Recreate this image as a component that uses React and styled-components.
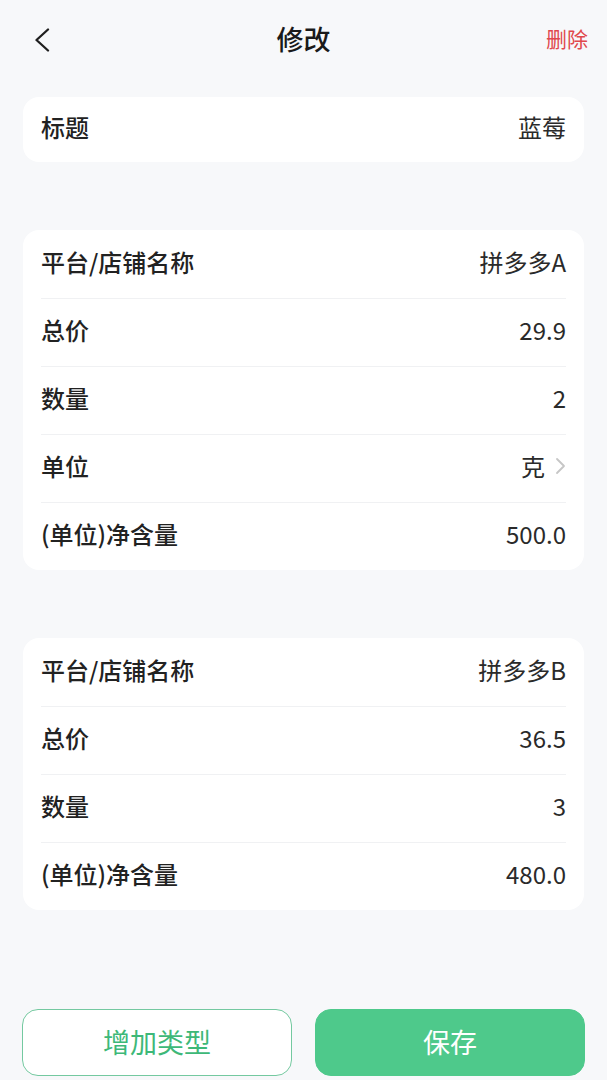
import React from "react";
import styled, { createGlobalStyle } from "styled-components";

const GlobalStyle = createGlobalStyle`
  html, body {
    margin: 0;
    padding: 0;
    background: #f7f8fa;
  }
  * { box-sizing: border-box; }
`;

const Page = styled.div`
  min-height: 100vh;
  display: flex;
  flex-direction: column;
  background: #f7f8fa;
  font-family: "Noto Sans CJK SC", "Noto Sans", sans-serif;
  color: #1f1f1f;
`;

const Header = styled.div`
  height: 80px;
  padding-bottom: 3px;
  display: grid;
  grid-template-columns: 80px 1fr 80px;
  align-items: center;
`;

const Back = styled.div`
  padding-left: 34px;
  padding-top: 3px;
  display: flex;
  align-items: center;
`;

const Title = styled.div`
  text-align: center;
  font-size: 27px;
  font-weight: 500;
  line-height: 1;
  color: #1a1a1a;
`;

const Delete = styled.div`
  text-align: right;
  padding-right: 19px;
  font-size: 21px;
  line-height: 1;
  color: #e0474c;
`;

const Content = styled.div`
  padding: 17px 23px 0;
  display: flex;
  flex-direction: column;
  gap: 68px;
`;

const Card = styled.div`
  background: #fff;
  border-radius: 16px;
  padding: 0 18px;
`;

const Row = styled.div`
  height: ${p => p.h || 68}px;
  padding-bottom: 5px;
  display: flex;
  align-items: center;
  justify-content: space-between;
  border-top: ${p => (p.first ? "none" : "1px solid #f0f1f3")};
`;

const Label = styled.span`
  font-size: 24px;
  font-weight: 500;
  line-height: 1;
  color: #222;
`;

const Value = styled.span`
  font-size: 24px;
  line-height: 1;
  color: #2a2a2a;
  display: flex;
  align-items: center;
  gap: 10px;
`;

const Spacer = styled.div`
  flex: 1;
`;

const Footer = styled.div`
  display: flex;
  gap: 23px;
  padding: 0 22px 4px;
`;

const Btn = styled.div`
  flex: 1;
  height: 67px;
  padding-bottom: 3px;
  border-radius: 16px;
  display: flex;
  align-items: center;
  justify-content: center;
  font-size: 27px;
  line-height: 1;
  background: ${p => (p.primary ? "#4ec98b" : "#fff")};
  color: ${p => (p.primary ? "#fff" : "#3db878")};
  border: 1.5px solid ${p => (p.primary ? "#4ec98b" : "#74c9a0")};
`;

const Chevron = () => (
  <svg width="16" height="24" viewBox="0 0 16 24" fill="none">
    <path d="M14 1.5 L2.5 12 L14 22.5" stroke="#1f1f1f" strokeWidth="2.3" strokeLinecap="round" strokeLinejoin="round" />
  </svg>
);

const Arrow = () => (
  <svg width="11" height="18" viewBox="0 0 11 18" fill="none">
    <path d="M2 2 L9 9 L2 16" stroke="#c6c6c6" strokeWidth="1.8" strokeLinecap="round" strokeLinejoin="round" />
  </svg>
);

const shops = [
  [
    ["平台/店铺名称", "拼多多A"],
    ["总价", "29.9"],
    ["数量", "2"],
    ["单位", "克", true],
    ["(单位)净含量", "500.0"],
  ],
  [
    ["平台/店铺名称", "拼多多B"],
    ["总价", "36.5"],
    ["数量", "3"],
    ["(单位)净含量", "480.0"],
  ],
];

export default function App() {
  return (
    <>
      <GlobalStyle />
      <Page>
        <Header>
          <Back>
            <Chevron />
          </Back>
          <Title>修改</Title>
          <Delete>删除</Delete>
        </Header>
        <Content>
          <Card>
            <Row first h={65}>
              <Label>标题</Label>
              <Value>蓝莓</Value>
            </Row>
          </Card>
          {shops.map((rows, i) => (
            <Card key={i}>
              {rows.map(([label, value, arrow], j) => (
                <Row key={label} first={j === 0}>
                  <Label>{label}</Label>
                  <Value>
                    {value}
                    {arrow && <Arrow />}
                  </Value>
                </Row>
              ))}
            </Card>
          ))}
        </Content>
        <Spacer />
        <Footer>
          <Btn>增加类型</Btn>
          <Btn primary>保存</Btn>
        </Footer>
      </Page>
    </>
  );
}
